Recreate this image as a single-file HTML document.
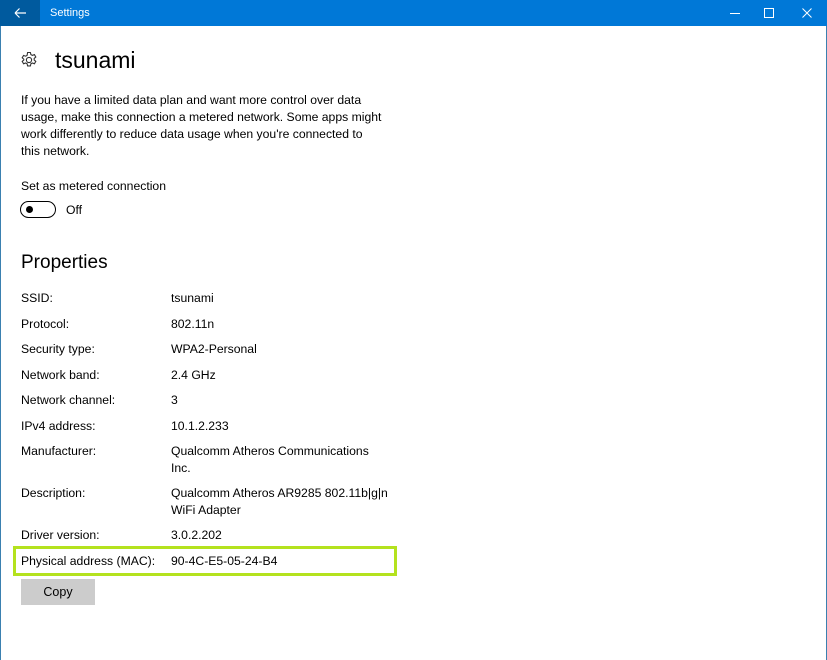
<!DOCTYPE html>
<html><head><style>
body{margin:0;width:827px;height:660px;background:#fff;font-family:"Segoe UI","Liberation Sans",sans-serif;color:#000;position:relative;overflow:hidden}
.tb{position:absolute;left:0;top:0;width:827px;height:26px;background:#0078d7;color:#fff;font-size:11px}
.bk{position:absolute;left:0;top:0;width:40px;height:26px;background:#005a9e}
.t{position:absolute;font-size:12.2px;white-space:nowrap;line-height:17px}
.lb{left:21px}.vl{left:171px}
</style></head><body>
<div class="tb"><div class="bk"><svg width="40" height="26"><path d="M15 13h11M15 13l4.5-4.5M15 13l4.5 4.5" stroke="#fff" stroke-width="1.2" fill="none"/></svg></div>
<div style="position:absolute;left:50px;top:7px">Settings</div>
<svg style="position:absolute;left:700px;top:0" width="127" height="26"><path d="M30 13.5h10" stroke="#fff"/><rect x="64.5" y="8.5" width="9" height="9" stroke="#fff" fill="none"/><path d="M102.5 8.5l9 9M111.5 8.5l-9 9" stroke="#fff"/></svg></div>
<div style="position:absolute;left:0;top:26px;width:1px;height:634px;background:#3a80b0"></div>
<div style="position:absolute;right:0;top:26px;width:1px;height:634px;background:#3a80b0"></div>
<svg style="position:absolute;left:20px;top:51px" width="18" height="18" viewBox="0 0 18 18"><g fill="none" stroke="#333" stroke-width="1.1"><circle cx="9" cy="9" r="2.6"/><path d="M7.6 1.5h2.8l.5 2.1 1.5.8 2-.8 1.4 2.4-1.6 1.4v1.6l1.6 1.4-1.4 2.4-2-.8-1.5.8-.5 2.1H7.6l-.5-2.1-1.5-.8-2 .8-1.4-2.4 1.6-1.4V8.2L2.2 6.8l1.4-2.4 2 .8 1.5-.8z"/></g></svg>
<div class="t" style="left:55px;top:45px;font-size:23px;line-height:30px">tsunami</div>
<div class="t" style="left:21px;top:92px;line-height:17px">If you have a limited data plan and want more control over data<br>usage, make this connection a metered network. Some apps might<br>work differently to reduce data usage when you're connected to<br>this network.</div>
<div class="t lb" style="top:178px">Set as metered connection</div>
<div style="position:absolute;left:20px;top:201px;width:36px;height:17px;border:1.5px solid #000;border-radius:10px;box-sizing:border-box"><div style="position:absolute;left:5px;top:3.5px;width:7px;height:7px;border-radius:50%;background:#000"></div></div>
<div class="t" style="left:66px;top:202px">Off</div>
<div class="t lb" style="top:251px;font-size:19px;line-height:24px">Properties</div>
<div class="t lb" style="top:290px">SSID:</div><div class="t vl" style="top:290px">tsunami</div>
<div class="t lb" style="top:316px">Protocol:</div><div class="t vl" style="top:316px">802.11n</div>
<div class="t lb" style="top:341px">Security type:</div><div class="t vl" style="top:341px">WPA2-Personal</div>
<div class="t lb" style="top:367px">Network band:</div><div class="t vl" style="top:367px">2.4 GHz</div>
<div class="t lb" style="top:392px">Network channel:</div><div class="t vl" style="top:392px">3</div>
<div class="t lb" style="top:418px">IPv4 address:</div><div class="t vl" style="top:418px">10.1.2.233</div>
<div class="t lb" style="top:443px">Manufacturer:</div><div class="t vl" style="top:443px">Qualcomm Atheros Communications<br>Inc.</div>
<div class="t lb" style="top:485px">Description:</div><div class="t vl" style="top:485px">Qualcomm Atheros AR9285 802.11b|g|n<br>WiFi Adapter</div>
<div class="t lb" style="top:527px">Driver version:</div><div class="t vl" style="top:527px">3.0.2.202</div>
<div style="position:absolute;left:13px;top:546px;width:384px;height:30px;border:3px solid #b4e21e;box-sizing:border-box"></div>
<div class="t lb" style="top:553px">Physical address (MAC):</div><div class="t vl" style="top:553px">90-4C-E5-05-24-B4</div>
<div style="position:absolute;left:21px;top:579px;width:74px;height:26px;background:#ccc;font-size:12.5px;text-align:center;line-height:26px">Copy</div>
</body></html>
